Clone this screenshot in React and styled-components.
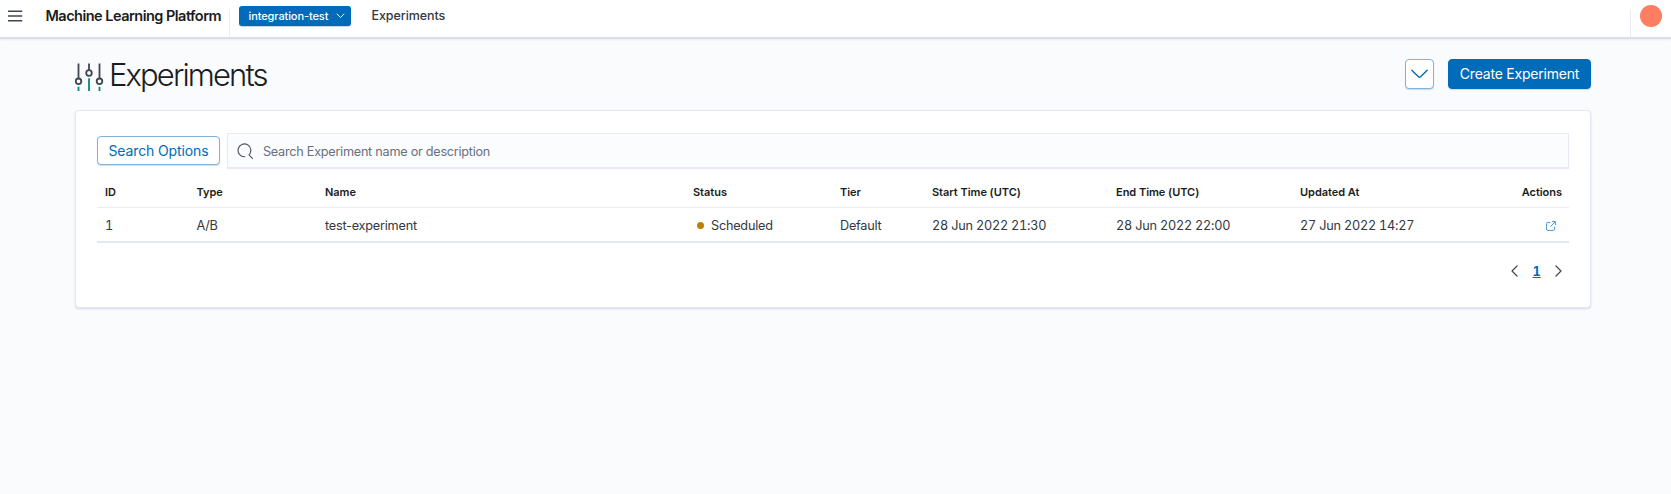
import React from "react";
import styled, { createGlobalStyle } from "styled-components";

const GlobalStyle = createGlobalStyle`
  *, *::before, *::after { box-sizing: border-box; }
  body {
    margin: 0;
    min-height: 100vh;
    background: #fafbfd;
    color: #343741;
    font-family: Inter, "Liberation Sans", sans-serif;
    -webkit-font-smoothing: antialiased;
  }
  button, input { font: inherit; }
  svg { display: block; flex: none; }
`;

const Header = styled.header`
  display: flex;
  align-items: flex-start;
  height: 39px;
  padding-left: 8px;
  background: #fff;
  border-bottom: 2px solid #d8dfe8;
  box-shadow: 0 1px 2px rgba(100, 120, 150, 0.12);
`;

const MenuButton = styled.button`
  display: flex;
  padding: 10px 0 0;
  width: 37.5px;
  border: 0;
  background: none;
  color: #404650;
`;

const Brand = styled.div`
  width: 183.5px;
  line-height: 32px;
  font-size: 14.5px;
  font-weight: 600;
  letter-spacing: -0.52px;
  color: #1a1c21;
  white-space: nowrap;
`;

const HeaderDivider = styled.div`
  width: ${(p) => p.$width}px;
  height: 28px;
  margin-top: 9px;
  background: #e8ecf3;
`;

const ProjectBadge = styled.button`
  display: flex;
  align-items: center;
  justify-content: space-between;
  width: 111.5px;
  height: 20px;
  margin: 6px 0 0 9px;
  padding: 0 6px 1px 9.5px;
  border: 0;
  border-radius: 3px;
  background: #006bb8;
  box-shadow: 0 1px 1px rgba(0, 80, 150, 0.25);
  color: #fff;
  font-size: 11px;
  font-weight: 500;
  letter-spacing: -0.1px;
  white-space: nowrap;
`;

const Breadcrumb = styled.div`
  margin-left: 21px;
  line-height: 31px;
  font-size: 12.5px;
  font-weight: 500;
  letter-spacing: -0.08px;
`;

const HeaderEnd = styled.div`
  display: flex;
  margin-left: auto;
  padding-right: 9px;
`;

const Avatar = styled.div`
  width: 22px;
  height: 22px;
  margin: 5px 0 0 9px;
  border-radius: 50%;
  background: #ff7e62;
`;

const Page = styled.main`
  padding: 20px 80px 0 75px;
`;

const PageHeader = styled.div`
  display: flex;
  align-items: center;
  height: 30px;
`;

const TitleIcon = styled.svg`
  margin-top: 7px;
`;

const PageTitle = styled.h1`
  margin: 2px 0 0 5px;
  font-size: 31px;
  line-height: 36px;
  font-weight: 300;
  letter-spacing: -1.9px;
  color: #1a1c21;
`;

const TitleActions = styled.div`
  display: flex;
  gap: 14px;
  margin-left: auto;
`;

const Button = styled.button`
  display: flex;
  align-items: center;
  justify-content: center;
  width: ${(p) => p.$width}px;
  height: 30px;
  padding: 0 0 1px;
  border: 1px solid ${(p) => (p.$fill ? "#006bb8" : "#7fb3da")};
  border-radius: 4px;
  background: ${(p) => (p.$fill ? "#006bb8" : "#fff")};
  box-shadow: 0 1px 1px rgba(0, 107, 184, 0.2);
  color: ${(p) => (p.$fill ? "#fff" : "#006bb8")};
  font-size: 14px;
  letter-spacing: ${(p) => p.$spacing || 0}px;
  white-space: nowrap;
`;

const Panel = styled.section`
  height: 198px;
  margin-top: 21px;
  padding: 22px 21px 0;
  border: 1px solid #e3e8f0;
  border-radius: 4px;
  background: #fff;
  box-shadow: 0 1px 2px rgba(100, 120, 150, 0.25);
`;

const SearchRow = styled.div`
  display: flex;
  align-items: flex-start;
  gap: 7px;
  & > button { margin-top: 3px; height: 29px; }
`;

const SearchField = styled.label`
  display: flex;
  flex: 1;
  align-items: center;
  gap: 9px;
  height: 36px;
  padding: 1px 0 0 9px;
  border: 1px solid #e6eaf2;
  border-bottom-width: 2px;
  background: #fbfcfd;
  color: #50555f;
`;

const SearchInput = styled.input`
  flex: 1;
  padding: 0;
  border: 0;
  outline: 0;
  background: none;
  font-size: 12.7px;
  letter-spacing: -0.27px;
  &::placeholder { color: #69707d; opacity: 1; }
`;

const Table = styled.table`
  width: 100%;
  table-layout: fixed;
  border-collapse: separate;
  border-spacing: 0;
`;

const HeadCell = styled.th`
  width: ${(p) => p.$width}px;
  height: 39px;
  padding: 7px 7px 0 8px;
  border-bottom: 1px solid #e9ecf3;
  color: #1a1c21;
  font-size: 11px;
  font-weight: 600;
  letter-spacing: -0.03px;
  text-align: ${(p) => p.$align || "left"};
  white-space: nowrap;
`;

const Cell = styled.td`
  height: 35px;
  padding: 1px 8px 0;
  border-bottom: 2px solid #e3e8ef;
  font-size: 12.7px;
  font-variant-numeric: ${(p) => (p.$numeric ? "tabular-nums" : "normal")};
  letter-spacing: -0.23px;
  white-space: nowrap;
`;

const Status = styled.div`
  display: flex;
  align-items: center;
  gap: 7px;
  padding-left: 4px;
  &::before {
    content: "";
    width: 7px;
    height: 7px;
    border-radius: 50%;
    background: #bf8000;
  }
`;

const OpenLink = styled.a`
  display: flex;
  justify-content: flex-end;
  padding: 1px 5.5px 0 0;
  color: #4a98d3;
`;

const Pagination = styled.nav`
  display: flex;
  align-items: center;
  justify-content: flex-end;
  gap: 14.5px;
  height: 20px;
  margin-top: 18px;
  padding-right: 7px;
  color: #404650;
`;

const PageNumber = styled.a`
  width: 8px;
  text-align: center;
  color: #006bb8;
  font-size: 12.7px;
  font-weight: 700;
  font-variant-numeric: tabular-nums;
  text-decoration: underline;
`;

const Chevron = ({ width, height, d, stroke = 1.2 }) => (
  <svg width={width} height={height} viewBox={`0 0 ${width} ${height}`} fill="none" stroke="currentColor" strokeWidth={stroke} strokeLinecap="round" strokeLinejoin="round">
    <path d={d} />
  </svg>
);

const MenuIcon = () => (
  <svg width="15" height="12" viewBox="0 0 15 12" stroke="currentColor" strokeWidth="1.6">
    <path d="M0 1.2h14.3M0 6h14.3M0 10.8h14.3" />
  </svg>
);

const SlidersIcon = () => (
  <TitleIcon width="29" height="29" viewBox="0 0 29 29" fill="none" strokeWidth="1.8">
    <g stroke="#404650">
      <path d="M3.5 0.5V15M14 0.5V7M24.5 0.5V15" />
      <circle cx="3.5" cy="18.3" r="2.8" />
      <circle cx="14" cy="10" r="2.8" />
      <circle cx="24.5" cy="18.3" r="2.8" />
    </g>
    <path stroke="#008a7c" d="M3.5 23.7V28M14 15.3V28M24.5 23.7V28" />
  </TitleIcon>
);

const SearchIcon = () => (
  <svg width="17" height="17" viewBox="0 0 17 17" fill="none" stroke="currentColor" strokeWidth="1.15" strokeLinecap="round">
    <path d="M7.6 13.7A6.4 6.4 0 1 1 12 11.8L15.4 15.4" />
  </svg>
);

const OpenIcon = () => (
  <svg width="10" height="10" viewBox="0 0 10 10" fill="none" stroke="currentColor" strokeWidth="1">
    <path d="M4.3 1.4H1.8Q.6 1.4.6 2.6V8.2Q.6 9.4 1.8 9.4H7.4Q8.6 9.4 8.6 8.2V5.7M6 .6H9.4V4M9.2.8 4.3 5.7" />
  </svg>
);

const columns = [
  ["ID", 91.5],
  ["Type", 128.5],
  ["Name", 368],
  ["Status", 147],
  ["Tier", 92],
  ["Start Time (UTC)", 184],
  ["End Time (UTC)", 184],
  ["Updated At", 184],
  ["Actions", 93, "right"],
];

export default function App() {
  return (
    <>
      <GlobalStyle />
      <Header>
        <MenuButton aria-label="Menu"><MenuIcon /></MenuButton>
        <Brand>Machine Learning Platform</Brand>
        <HeaderDivider $width={1} />
        <ProjectBadge>
          integration-test
          <Chevron width={9} height={6} d="M1 1 4.5 4.5 8 1" stroke={1} />
        </ProjectBadge>
        <Breadcrumb>Experiments</Breadcrumb>
        <HeaderEnd>
          <HeaderDivider $width={1} />
          <Avatar />
        </HeaderEnd>
      </Header>
      <Page>
        <PageHeader>
          <SlidersIcon />
          <PageTitle>Experiments</PageTitle>
          <TitleActions>
            <Button $width={29} aria-label="More actions">
              <Chevron width={17} height={10} d="M.8 1.2 7.5 7.8Q8.5 8.8 9.5 7.8L16.2 1.2" stroke={1.4} />
            </Button>
            <Button $width={143} $fill $spacing={-0.21}>Create Experiment</Button>
          </TitleActions>
        </PageHeader>
        <Panel>
          <SearchRow>
            <Button $width={123} $spacing={-0.12}>Search Options</Button>
            <SearchField>
              <SearchIcon />
              <SearchInput placeholder="Search Experiment name or description" />
            </SearchField>
          </SearchRow>
          <Table>
            <thead>
              <tr>
                {columns.map(([label, width, align]) => (
                  <HeadCell key={label} $width={width} $align={align}>{label}</HeadCell>
                ))}
              </tr>
            </thead>
            <tbody>
              <tr>
                <Cell $numeric>1</Cell>
                <Cell>A/B</Cell>
                <Cell>test-experiment</Cell>
                <Cell><Status>Scheduled</Status></Cell>
                <Cell>Default</Cell>
                <Cell $numeric>28 Jun 2022 21:30</Cell>
                <Cell $numeric>28 Jun 2022 22:00</Cell>
                <Cell $numeric>27 Jun 2022 14:27</Cell>
                <Cell><OpenLink aria-label="Open experiment"><OpenIcon /></OpenLink></Cell>
              </tr>
            </tbody>
          </Table>
          <Pagination>
            <Chevron width={7} height={12} d="M6 1 1 6 6 11" />
            <PageNumber>1</PageNumber>
            <Chevron width={7} height={12} d="M1 1 6 6 1 11" />
          </Pagination>
        </Panel>
      </Page>
    </>
  );
}
